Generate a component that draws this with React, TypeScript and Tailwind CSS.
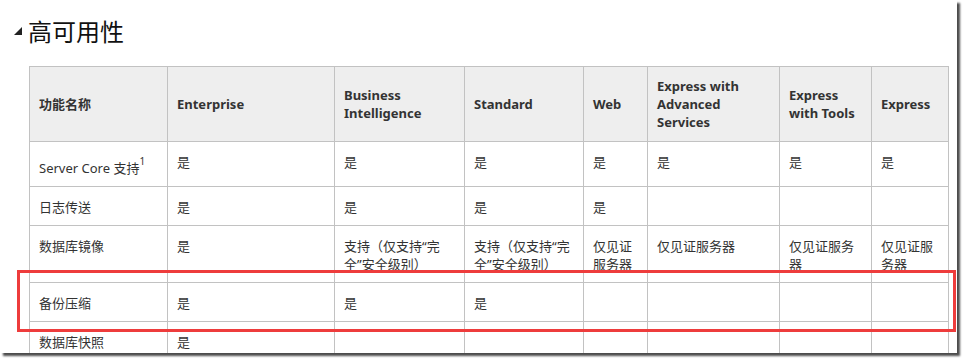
import React from "react";

const cols = [138, 167, 130, 119, 64, 132, 92, 77];

const headers = ["功能名称", "Enterprise", "Business Intelligence", "Standard", "Web", "Express with Advanced Services", "Express with Tools", "Express"];

const mirror = (
  <>
    支持（仅支持“完
    <br />
    全”安全级别）
  </>
);

const rows: React.ReactNode[][] = [
  [
    <>
      Server Core 支持<sup className="relative -top-[8px] text-[10px] leading-none">1</sup>
    </>,
    "是", "是", "是", "是", "是", "是", "是",
  ],
  ["日志传送", "是", "是", "是", "是", "", "", ""],
  ["数据库镜像", "是", mirror, mirror, "仅见证服务器", "仅见证服务器", "仅见证服务器", "仅见证服务器"],
  ["备份压缩", "是", "是", "是", "", "", "", ""],
  ["数据库快照", "是", "", "", "", "", "", ""],
];

const App = () => {
  return (
    <main className="w-[963px] h-[359px] bg-white" style={{fontFamily: '"Noto Sans", "Noto Sans CJK SC", sans-serif'}}>
      <div className="relative w-[957px] h-[353px] bg-white overflow-hidden shadow-[3px_3px_2px_rgba(0,0,0,0.7)]">
        {/* title */}
        <div className="flex items-center gap-[6px] pl-[14px] pt-[15px] h-[47px]">
          <svg width="8" height="8" viewBox="0 0 8 8" className="shrink-0">
            <polygon points="8,0 8,8 0,8" fill="#222" />
          </svg>
          <h2 className="text-[24px] leading-[32px] text-[#111]" style={{fontFamily: '"Noto Sans CJK SC", sans-serif'}}>
            高可用性
          </h2>
        </div>

        <table className="ml-[29px] mt-[19px] w-[919px] table-fixed border-collapse text-[13px] leading-[18px] text-[#333]">
          <colgroup>
            {cols.map((w, i) => (
              <col key={i} style={{width: w}} />
            ))}
          </colgroup>
          <thead>
            <tr>
              {headers.map((h) => (
                <th key={h} className="border border-[#c2c2c2] bg-[#eeeeee] pl-[9px] pr-[5px] py-[10px] text-left align-middle font-bold text-[#333]">
                  {h}
                </th>
              ))}
            </tr>
          </thead>
          <tbody>
            {rows.map((r, ri) => (
              <tr key={ri}>
                {r.map((c, ci) => (
                  <td
                    key={ci}
                    className={
                      ri === 0 && ci === 0
                        ? "border border-[#c2c2c2] pl-[9px] pr-[5px] pt-[17px] pb-[9px] align-top"
                        : "border border-[#c2c2c2] pl-[9px] pr-[5px] pt-[11px] pb-[9px] align-top"
                    }
                  >
                    {c}
                  </td>
                ))}
              </tr>
            ))}
          </tbody>
        </table>

        {/* highlight annotation */}
        <div className="absolute left-[17px] top-[270px] w-[939px] h-[62px] border-[3px] border-[#ee3c3c]" />
      </div>
    </main>
  );
};

export default App;
